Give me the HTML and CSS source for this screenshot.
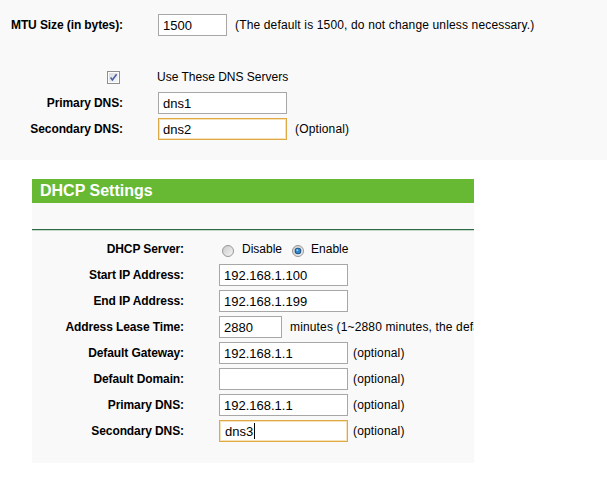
FILE: index.html
```html
<!DOCTYPE html>
<html>
<head>
  <title>Network Settings</title>
  <link rel="stylesheet" href="styles.css">
</head>
<body>
  <div class="wan-panel">
    <div class="row">
      <span class="lbl">MTU Size (in bytes):</span>
      <input type="text" class="field mtu" value="1500">
      <span class="note">(The default is 1500, do not change unless necessary.)</span>
    </div>
    <div class="row row-check">
      <span class="lbl">
        <svg class="checkbox" width="13" height="13" viewBox="0 0 13 13">
          <defs>
            <linearGradient id="cbg" x1="0" y1="0" x2="1" y2="1">
              <stop offset="0" stop-color="#dcdcdc"/>
              <stop offset="1" stop-color="#f7f7f7"/>
            </linearGradient>
          </defs>
          <rect x="0.5" y="0.5" width="12" height="12" fill="#fdfdfd" stroke="#8f8f8f"/>
          <rect x="2" y="2" width="9" height="9" fill="url(#cbg)"/>
          <path d="M3.6 6.6 L5.4 9 L9.6 3.2" fill="none" stroke="#4a5fa8" stroke-width="1.6"/>
        </svg>
      </span>
      <span class="text">Use These DNS Servers</span>
    </div>
    <div class="row">
      <span class="lbl">Primary DNS:</span>
      <input type="text" class="field wide" value="dns1">
    </div>
    <div class="row">
      <span class="lbl">Secondary DNS:</span>
      <input type="text" class="field wide focused" value="dns2">
      <span class="note">(Optional)</span>
    </div>
  </div>

  <div class="dhcp">
    <div class="dhcp-title">DHCP Settings</div>
    <div class="dhcp-space"></div>
    <div class="dhcp-body">
      <div class="row">
        <span class="lbl">DHCP Server:</span>
        <span class="radio-group">
          <svg class="radio" width="12" height="12" viewBox="0 0 12 12">
            <defs>
              <linearGradient id="rg" x1="0" y1="0" x2="1" y2="1">
                <stop offset="0" stop-color="#c9c9c9"/>
                <stop offset="1" stop-color="#f6f6f6"/>
              </linearGradient>
            </defs>
            <circle cx="6" cy="6" r="5.5" fill="url(#rg)" stroke="#979797"/>
          </svg>
          <span class="radio-text">Disable</span>
          <svg class="radio" width="12" height="12" viewBox="0 0 12 12">
            <circle cx="6" cy="6" r="5.5" fill="url(#rg)" stroke="#979797"/>
            <circle cx="6" cy="6" r="3.3" fill="#1f4f7f"/>
            <circle cx="6" cy="6" r="2.4" fill="#2e8ad0"/>
            <circle cx="5.3" cy="5.2" r="0.9" fill="#9fd3f5"/>
          </svg>
          <span class="radio-text">Enable</span>
        </span>
      </div>
      <div class="row">
        <span class="lbl">Start IP Address:</span>
        <input type="text" class="field wide" value="192.168.1.100">
      </div>
      <div class="row">
        <span class="lbl">End IP Address:</span>
        <input type="text" class="field wide" value="192.168.1.199">
      </div>
      <div class="row">
        <span class="lbl">Address Lease Time:</span>
        <input type="text" class="field lease" value="2880">
        <span class="note">minutes (1~2880 minutes, the default value is 120)</span>
      </div>
      <div class="row">
        <span class="lbl">Default Gateway:</span>
        <input type="text" class="field wide" value="192.168.1.1">
        <span class="note tight">(optional)</span>
      </div>
      <div class="row">
        <span class="lbl">Default Domain:</span>
        <input type="text" class="field wide" value="">
        <span class="note tight">(optional)</span>
      </div>
      <div class="row">
        <span class="lbl">Primary DNS:</span>
        <input type="text" class="field wide" value="192.168.1.1">
        <span class="note tight">(optional)</span>
      </div>
      <div class="row">
        <span class="lbl">Secondary DNS:</span>
        <span class="field wide focused fake">dns3<span class="caret"></span></span>
        <span class="note tight">(optional)</span>
      </div>
    </div>
  </div>
</body>
</html>
```

FILE: styles.css
```css
body {
  margin: 0;
  background: #fff;
  font-family: "Liberation Sans", Arial, sans-serif;
  font-size: 12px;
  color: #000;
}
.wan-panel {
  background: #f9f9f9;
  height: 160px;
  box-sizing: border-box;
  padding-top: 14px;
}
.row {
  display: flex;
  align-items: center;
  height: 22px;
  margin-bottom: 4px;
  white-space: nowrap;
}
.row-check {
  margin-top: 30px;
}
.lbl {
  width: 123px;
  flex: none;
  text-align: right;
  font-weight: bold;
  letter-spacing: -0.1px;
  margin-right: 35px;
  display: flex;
  justify-content: flex-end;
}
.checkbox {
  display: block;
  margin-right: 3px;
}
.text {
  margin-left: -1px;
}
.field {
  height: 22px;
  box-sizing: border-box;
  border: 1px solid #a7a7a7;
  background: #fff;
  padding: 0 4px;
  font-family: "Liberation Sans", Arial, sans-serif;
  font-size: 13px;
  color: #000;
  outline: none;
  margin: 0;
  flex: none;
}
.field.mtu {
  width: 69px;
}
.field.wide {
  width: 129px;
}
.field.lease {
  width: 63px;
}
.field.focused {
  border-color: #dfa946;
  box-shadow: inset 0 0 0 1px #f6e2b8;
}
.fake {
  display: flex;
  align-items: center;
  padding-left: 5px;
}
.caret {
  display: inline-block;
  width: 1px;
  height: 16px;
  background: #000;
  margin-left: 1px;
}
.note {
  margin-left: 8px;
  letter-spacing: 0.15px;
}
.note.tight {
  margin-left: 5px;
}
.dhcp {
  margin: 19px 0 0 32px;
  width: 442px;
  background: #f9f9f9;
  overflow: hidden;
}
.dhcp-title {
  height: 24px;
  line-height: 24px;
  background: #67b934;
  color: #fff;
  font-size: 16px;
  font-weight: bold;
  padding-left: 8px;
}
.dhcp-space {
  height: 26px;
  border-bottom: 1px solid #2f6b45;
  box-shadow: 0 1px 0 #c2d8c8;
}
.dhcp-body {
  padding: 8px 0 17px;
}
.dhcp-body .lbl {
  width: 152px;
}
.radio-group {
  display: flex;
  align-items: center;
}
.radio {
  display: block;
  margin: 4px 0 0 3px;
}
.radio-text {
  margin: 0 10px 0 8px;
}
.radio-text + .radio {
  margin-left: 0;
}
.radio-group .radio-text:last-child {
  margin-left: 7px;
}
```
